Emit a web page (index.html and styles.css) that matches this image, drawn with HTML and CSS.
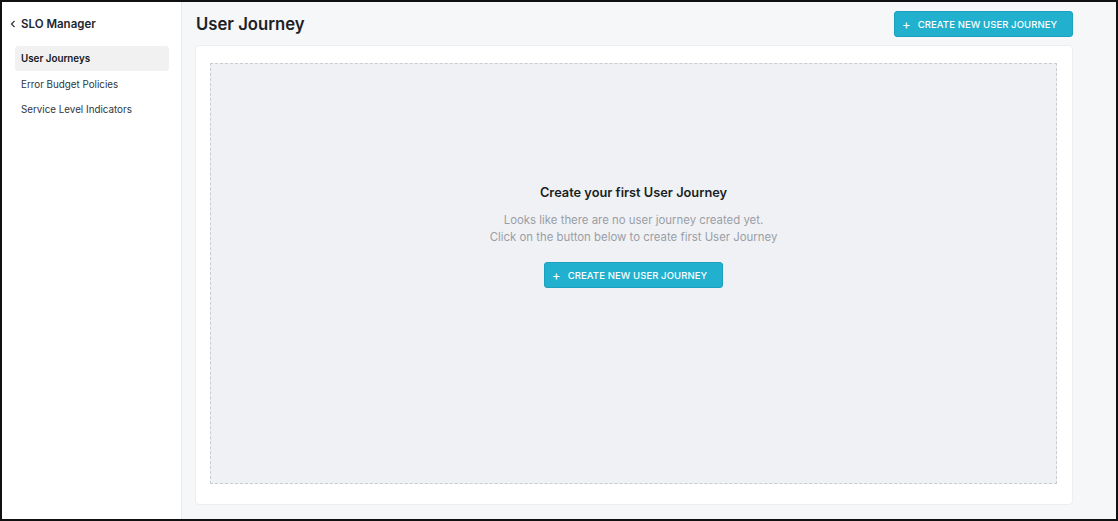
FILE: index.html
```html
<!DOCTYPE html>
<html lang="en">
<head>
    <meta charset="UTF-8">
    <title>SLO Manager - User Journey</title>
    <link rel="stylesheet" href="styles.css">
</head>
<body>
    <div class="frame">
        <div class="sidebar">
            <div class="sideTitle">
                <span class="backArrow">
                    <svg width="6" height="8" viewBox="0 0 6 8"><path d="M4.5 1 L1.5 4 L4.5 7" fill="none" stroke="#333" stroke-width="1.2"/></svg>
                </span>
                SLO Manager
            </div>
            <ul class="navList">
                <li class="navItem active">User Journeys</li>
                <li class="navItem">Error Budget Policies</li>
                <li class="navItem">Service Level Indicators</li>
            </ul>
        </div>
        <div class="main">
            <div class="header">
                <h1 class="pageTitle">User Journey</h1>
                <button class="primaryBtn">
                    <span class="plus">+</span>CREATE NEW USER JOURNEY
                </button>
            </div>
            <div class="card">
                <div class="emptyBox">
                    <p class="emptyTitle">Create your first User Journey</p>
                    <p class="emptyText">Looks like there are no user journey created yet.<br>Click on the button below to create first User Journey</p>
                    <button class="primaryBtn">
                        <span class="plus">+</span>CREATE NEW USER JOURNEY
                    </button>
                </div>
            </div>
        </div>
    </div>
</body>
</html>
```

FILE: styles.css
```css
*{
    margin: 0;
    padding: 0;
    box-sizing: border-box;
}
body{
    font-family: Inter, "Noto Sans", sans-serif;
    color: #22272e;
}
.frame{
    width: 1118px;
    height: 521px;
    border: 2px solid #111;
    display: flex;
    overflow: hidden;
}
.sidebar{
    width: 180px;
    background-color: #fff;
    border-right: 1px solid #e8eaee;
    padding: 14px 12px 0 8px;
}
.sideTitle{
    display: flex;
    align-items: center;
    font-size: 11.5px;
    font-weight: 600;
    height: 16px;
}
.backArrow{
    display: inline-flex;
    width: 11px;
}
.navList{
    list-style: none;
    margin-top: 14px;
    padding-left: 5px;
}
.navItem{
    height: 25px;
    line-height: 25px;
    padding-left: 6px;
    font-size: 9.8px;
    color: #30353c;
    border-radius: 3px;
    margin-bottom: 0.5px;
}
.navItem.active{
    background-color: #f1f1f2;
    font-weight: 600;
    color: #15181c;
}
.main{
    flex: 1;
    background-color: #f6f7f9;
    padding: 9px 43px 14px 13px;
    display: flex;
    flex-direction: column;
}
.header{
    display: flex;
    justify-content: space-between;
    align-items: center;
    height: 26px;
    margin-bottom: 8px;
}
.pageTitle{
    font-size: 16.7px;
    font-weight: 600;
    color: #1d2126;
    padding-left: 1px;
}
.primaryBtn{
    height: 26px;
    width: 179px;
    background-color: #22b0cf;
    border: 1px solid #1ca0be;
    border-radius: 3px;
    color: #fff;
    font-family: Inter, "Noto Sans", sans-serif;
    font-size: 9.5px;
    font-weight: 500;
    letter-spacing: 0.1px;
    display: flex;
    align-items: center;
    justify-content: flex-start;
    padding-left: 7px;
}
.plus{
    font-size: 13px;
    font-weight: 400;
    margin-right: 7px;
    margin-top: -1px;
}
.card{
    flex: 1;
    background-color: #fff;
    border: 1px solid #eceef1;
    border-radius: 4px;
    padding: 17px 15px 20px 14px;
    display: flex;
}
.emptyBox{
    flex: 1;
    background-color: #f0f1f4;
    border: 1px dashed #c9ccd1;
    display: flex;
    flex-direction: column;
    align-items: center;
    justify-content: center;
    padding-bottom: 74px;
}
.emptyTitle{
    font-size: 12.8px;
    font-weight: 600;
    color: #1b1f24;
    margin-bottom: 12px;
}
.emptyText{
    font-size: 11.4px;
    line-height: 17px;
    color: #9a9ea7;
    text-align: center;
    margin-bottom: 16px;
}
```
